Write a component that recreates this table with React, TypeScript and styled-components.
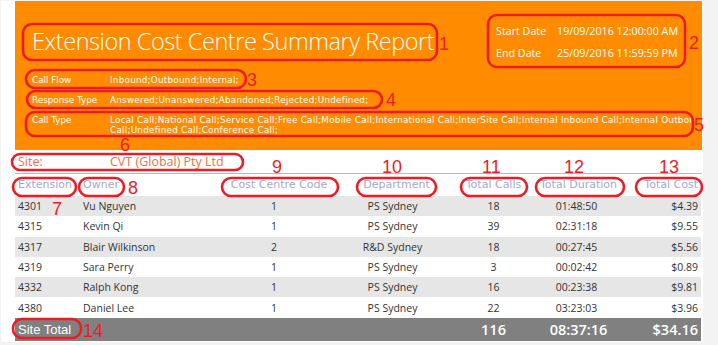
import styled, { createGlobalStyle } from "styled-components";

const GlobalStyle = createGlobalStyle`
  html, body {
    margin: 0;
    padding: 0;
    background: #f3f3f3;
  }
`;

type Row = {
  ext: string;
  owner: string;
  code: string;
  dept: string;
  calls: string;
  duration: string;
  cost: string;
};

const rows: Row[] = [
  { ext: "4301", owner: "Vu Nguyen", code: "1", dept: "PS Sydney", calls: "18", duration: "01:48:50", cost: "$4.39" },
  { ext: "4315", owner: "Kevin Qi", code: "1", dept: "PS Sydney", calls: "39", duration: "02:31:18", cost: "$9.55" },
  { ext: "4317", owner: "Blair Wilkinson", code: "2", dept: "R&D Sydney", calls: "18", duration: "00:27:45", cost: "$5.56" },
  { ext: "4319", owner: "Sara Perry", code: "1", dept: "PS Sydney", calls: "3", duration: "00:02:42", cost: "$0.89" },
  { ext: "4332", owner: "Ralph Kong", code: "1", dept: "PS Sydney", calls: "16", duration: "00:23:38", cost: "$9.81" },
  { ext: "4380", owner: "Daniel Lee", code: "1", dept: "PS Sydney", calls: "22", duration: "03:23:03", cost: "$3.96" },
];

// red markup drawn over the report: [x, y, w, h]
const marks: [number, number, number, number][] = [
  [23, 24, 414, 36],
  [488, 15, 197, 52],
  [26, 70, 220, 18],
  [27, 91, 355, 17],
  [26, 112, 667, 24],
  [12, 154, 231, 16],
  [13, 178, 63, 18],
  [79, 178, 45, 18],
  [222, 178, 116, 18],
  [357, 178, 79, 18],
  [461, 178, 66, 18],
  [536, 178, 88, 18],
  [636, 178, 66, 18],
  [13, 319, 68, 19],
];

const numbers: [string, number, number][] = [
  ["1", 439, 50],
  ["2", 689, 49],
  ["3", 247, 86],
  ["4", 386, 106],
  ["5", 694, 131],
  ["6", 120, 151],
  ["7", 52, 215],
  ["8", 128, 194],
  ["9", 272, 173],
  ["10", 382, 173],
  ["11", 482, 173],
  ["12", 564, 173],
  ["13", 659, 173],
  ["14", 83, 337],
];

const App = () => {
  return (
    <Root>
      <GlobalStyle />
      <Page>
        <Banner>
          <BannerTop>
            <Title>Extension Cost Centre Summary Report</Title>
            <Dates>
              <DateLabel>Start Date</DateLabel>
              <DateValue>19/09/2016 12:00:00 AM</DateValue>
              <DateLabel>End Date</DateLabel>
              <DateValue>25/09/2016 11:59:59 PM</DateValue>
            </Dates>
          </BannerTop>
          <FilterRow>
            <FilterLabel>Call Flow</FilterLabel>
            <FilterValue>Inbound;Outbound;Internal;</FilterValue>
          </FilterRow>
          <FilterRow>
            <FilterLabel>Response Type</FilterLabel>
            <FilterValue>Answered;Unanswered;Abandoned;Rejected;Undefined;</FilterValue>
          </FilterRow>
          <FilterRow $tall>
            <FilterLabel>Call Type</FilterLabel>
            <FilterValue>
              <ClipLine>
                Local Call;National Call;Service Call;Free Call;Mobile Call;International Call;InterSite Call;Internal Inbound Call;Internal Outbound
              </ClipLine>
              <ClipLine>Call;Undefined Call;Conference Call;</ClipLine>
            </FilterValue>
          </FilterRow>
        </Banner>

        <SiteRow>
          <SiteLabel>Site:</SiteLabel>
          <SiteName>CVT (Global) Pty Ltd</SiteName>
        </SiteRow>

        <Table>
          <HeadCell $align="left">Extension</HeadCell>
          <HeadCell $align="left">Owner</HeadCell>
          <HeadCell $align="center">Cost Centre Code</HeadCell>
          <HeadCell $align="center">Department</HeadCell>
          <HeadCell $align="center">Total Calls</HeadCell>
          <HeadCell $align="center">Total Duration</HeadCell>
          <HeadCell $align="right">Total Cost</HeadCell>

          {rows.map((r, i) => (
            <DataRow key={r.ext} $shaded={i % 2 === 0}>
              <Cell $align="left">{r.ext}</Cell>
              <Cell $align="left">{r.owner}</Cell>
              <Cell $align="center" $shift={-5}>{r.code}</Cell>
              <Cell $align="center" $shift={-4}>{r.dept}</Cell>
              <Cell $align="center">{r.calls}</Cell>
              <Cell $align="center" $shift={-2}>{r.duration}</Cell>
              <Cell $align="right">{r.cost}</Cell>
            </DataRow>
          ))}

          <TotalRow>
            <TotalLabel>Site Total</TotalLabel>
            <span />
            <span />
            <span />
            <TotalCell $align="center">116</TotalCell>
            <TotalCell $align="center">08:37:16</TotalCell>
            <TotalCell $align="right">$34.16</TotalCell>
          </TotalRow>
        </Table>
      </Page>

      <Markup width="718" height="345" viewBox="0 0 718 345">
        {marks.map(([x, y, w, h], i) => (
          <rect key={i} x={x} y={y} width={w} height={h} rx={Math.min(9, h / 2)} />
        ))}
        {numbers.map(([t, x, y]) => (
          <text key={t} x={x} y={y}>
            {t}
          </text>
        ))}
      </Markup>
    </Root>
  );
};

export default App;

const Root = styled.div`
  position: relative;
  width: 718px;
  height: 345px;
  overflow: hidden;
`;

const Page = styled.div`
  margin: 1px 0 0 1px;
  width: 702px;
  height: 341px;
  background: #ffffff;
  padding: 0 1px 0 14px;
  box-sizing: border-box;
  font-family: "Open Sans", "Noto Sans", sans-serif;
`;

const Banner = styled.div`
  height: 149px;
  background: #ff8c00;
  color: #ffffff;
  padding: 0 11px 0 17px;
  box-sizing: border-box;
`;

const BannerTop = styled.div`
  height: 69px;
  display: flex;
  justify-content: space-between;
  align-items: flex-start;
`;

const Title = styled.div`
  margin-top: 25px;
  font-size: 23.5px;
  font-weight: 300;
  letter-spacing: -0.45px;
  line-height: 30px;
  white-space: nowrap;
`;

const Dates = styled.div`
  margin-top: 19px;
  margin-right: 13px;
  display: grid;
  grid-template-columns: 61px auto;
  grid-auto-rows: 22px;
  align-items: center;
  font-size: 10.7px;
`;

const DateLabel = styled.div`
  white-space: nowrap;
`;

const DateValue = styled.div`
  white-space: nowrap;
`;

const FilterRow = styled.div<{ $tall?: boolean }>`
  display: flex;
  height: ${(p) => (p.$tall ? 30 : 20)}px;
  align-items: ${(p) => (p.$tall ? "flex-start" : "center")};
  padding-top: ${(p) => (p.$tall ? 5 : 0)}px;
  box-sizing: border-box;
  font-family: "DejaVu Sans", sans-serif;
  font-size: 8.8px;
  line-height: 10px;
`;

const FilterLabel = styled.div`
  width: 78px;
  flex: none;
  white-space: nowrap;
`;

const FilterValue = styled.div`
  flex: 1;
  min-width: 0;
  overflow: hidden;
  letter-spacing: 0.25px;
`;

const ClipLine = styled.div`
  white-space: nowrap;
  overflow: hidden;
`;

const SiteRow = styled.div`
  height: 24px;
  display: flex;
  align-items: center;
  padding-left: 3px;
  border-bottom: 1px solid #f4a58c;
  box-sizing: border-box;
  color: #ec6f4c;
  font-size: 12.5px;
`;

const SiteLabel = styled.div`
  width: 92px;
`;

const SiteName = styled.div`
  white-space: nowrap;
`;

const Table = styled.div`
  display: grid;
  grid-template-columns: 65px 140px 118px 117px 77px 93px 76px;
`;

const HeadCell = styled.div<{ $align: "left" | "center" | "right" }>`
  height: 22px;
  line-height: 22px;
  padding: 0 3px;
  text-align: ${(p) => p.$align};
  font-family: "DejaVu Sans", sans-serif;
  font-size: 11px;
  color: #a8a6cc;
  white-space: nowrap;
`;

const DataRow = styled.div<{ $shaded: boolean }>`
  grid-column: 1 / -1;
  display: grid;
  grid-template-columns: subgrid;
  height: 20.3px;
  align-items: center;
  background: ${(p) => (p.$shaded ? "#e6e6e6" : "#ffffff")};
  font-size: 10.5px;
  color: #333333;
`;

const Cell = styled.div<{ $align: "left" | "center" | "right"; $shift?: number }>`
  padding: 0 3px;
  text-align: ${(p) => p.$align};
  white-space: nowrap;
  transform: translateX(${(p) => p.$shift ?? 0}px);
`;

const TotalRow = styled.div`
  grid-column: 1 / -1;
  display: grid;
  grid-template-columns: subgrid;
  height: 23px;
  align-items: center;
  background: #808080;
  color: #ffffff;
`;

const TotalLabel = styled.div`
  padding-left: 3px;
  font-family: "Liberation Sans", Arial, sans-serif;
  font-size: 13px;
  white-space: nowrap;
`;

const TotalCell = styled.div<{ $align: "center" | "right" }>`
  padding: 0 3px;
  text-align: ${(p) => p.$align};
  font-size: 14.5px;
  font-weight: 600;
  white-space: nowrap;
`;

const Markup = styled.svg`
  position: absolute;
  top: 0;
  left: 0;
  pointer-events: none;

  rect {
    fill: none;
    stroke: #ed1c24;
    stroke-width: 2.6;
  }

  text {
    fill: #ed1c24;
    font-family: "Liberation Sans", Arial, sans-serif;
    font-size: 18px;
  }
`;
